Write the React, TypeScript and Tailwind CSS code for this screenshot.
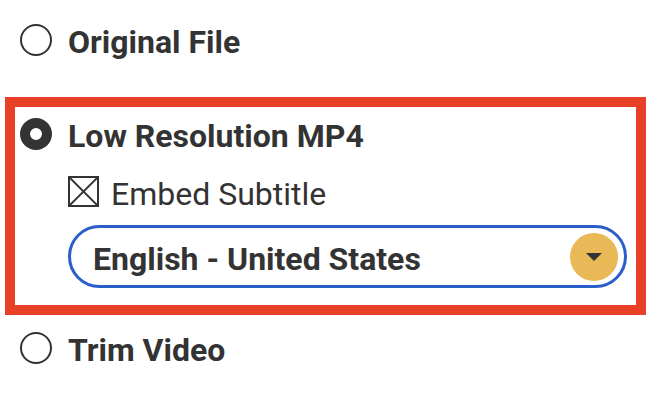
import React from "react";

function Radio({ checked }: { checked?: boolean }) {
  return checked ? (
    <div className="w-[32px] h-[32px] rounded-full border-[10px] border-[#333333] bg-white shrink-0" />
  ) : (
    <div className="w-[32px] h-[32px] rounded-full border-2 border-[#333333] bg-white shrink-0" />
  );
}

export default function App() {
  return (
    <div
      className="w-[662px] h-[414px] bg-white text-[#333333] relative"
      style={{ fontFamily: "Roboto, 'Liberation Sans', sans-serif" }}
    >
      <div className="pt-[24px] pl-[20px] flex items-center gap-[16px] h-[56px]">
        <Radio />
        <span className="text-[32px] font-bold leading-none pt-[4px]">Original File</span>
      </div>
      <div className="ml-[5px] mt-[41px] w-[641px] border-[10px] border-[#e84127] pl-[5px] pt-[11px] pb-[17px]">
        <div className="flex items-center gap-[16px] h-[32px]">
          <Radio checked />
          <span className="text-[32px] font-bold leading-none pt-[4px]">Low Resolution MP4</span>
        </div>
        <div className="ml-[48px] mt-[26px] flex items-center gap-[12px] h-[31px]">
          <svg width="31" height="31" viewBox="0 0 31 31" className="shrink-0">
            <rect x="1" y="1" width="29" height="29" fill="white" stroke="#333333" strokeWidth="2" />
            <line x1="2" y1="2" x2="29" y2="29" stroke="#333333" strokeWidth="1.8" />
            <line x1="29" y1="2" x2="2" y2="29" stroke="#333333" strokeWidth="1.8" />
          </svg>
          <span className="text-[32px] font-normal leading-none pt-[4px]">Embed Subtitle</span>
        </div>
        <div className="ml-[48px] mt-[18px] w-[559px] h-[63px] rounded-full border-[3px] border-[#2a5ec8] flex items-center pl-[22px] pr-[6px]">
          <span className="text-[32px] font-bold leading-none flex-1 pt-[4px]">English - United States</span>
          <div className="w-[48px] h-[48px] rounded-full bg-[#e8b956] flex items-center justify-center">
            <svg width="16" height="8" viewBox="0 0 16 8">
              <polygon points="0,0 16,0 8,8" fill="#333333" />
            </svg>
          </div>
        </div>
      </div>
      <div className="mt-[17px] pl-[20px] flex items-center gap-[16px] h-[32px]">
        <Radio />
        <span className="text-[32px] font-bold leading-none pt-[4px]">Trim Video</span>
      </div>
    </div>
  );
}
